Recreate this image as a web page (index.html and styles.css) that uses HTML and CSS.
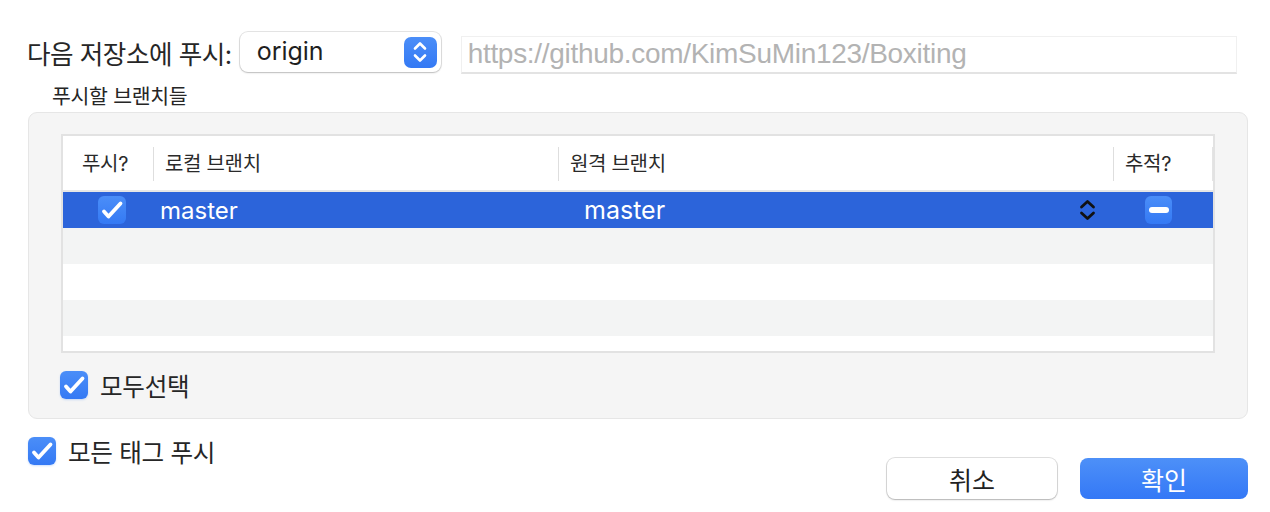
FILE: index.html
```html
<!DOCTYPE html>
<html lang="ko">
<head>
<meta charset="utf-8">
<link rel="stylesheet" href="styles.css">
</head>
<body>
<div class="dialog">
  <div class="top">
    <span class="top-label">다음 저장소에 푸시:</span>
    <div class="select">
      <span class="select-value">origin</span>
      <span class="select-stepper">
        <svg width="14" height="24" viewBox="0 0 14 24"><path d="M2 8.5 L7 3.5 L12 8.5 M2 15.5 L7 20.5 L12 15.5" fill="none" stroke="#fff" stroke-width="2.6" stroke-linecap="round" stroke-linejoin="round"/></svg>
      </span>
    </div>
    <div class="url">https://github.com/KimSuMin123/Boxiting</div>
  </div>
  <div class="section-label">푸시할 브랜치들</div>
  <div class="group">
    <div class="table">
      <div class="thead">
        <div class="th th-push">푸시?</div>
        <div class="th th-local">로컬 브랜치</div>
        <div class="th th-remote">원격 브랜치</div>
        <div class="th th-track">추적?</div>
        <div class="th th-rest"></div>
      </div>
      <div class="row selected">
        <div class="td td-push"><span class="cb"><svg width="28" height="28" viewBox="0 0 28 28"><path d="M6 15.5 L10.5 20.5 L22.5 7.5" fill="none" stroke="#fff" stroke-width="3.8" stroke-linecap="round" stroke-linejoin="round"/></svg></span></div>
        <div class="td td-local">master</div>
        <div class="td td-remote"><span>master</span>
          <svg class="row-stepper" width="17" height="24" viewBox="0 0 17 24"><path d="M2.5 9 L8.5 3.5 L14.5 9 M2.5 15 L8.5 20.5 L14.5 15" fill="none" stroke="#111" stroke-width="2.8" stroke-linecap="round" stroke-linejoin="round"/></svg>
        </div>
        <div class="td td-track"><span class="minus"><span class="minus-bar"></span></span></div>
        <div class="td td-rest"></div>
      </div>
      <div class="row alt"></div>
      <div class="row"></div>
      <div class="row alt"></div>
      <div class="row short"></div>
    </div>
    <label class="check-row select-all">
      <span class="cb"><svg width="28" height="28" viewBox="0 0 28 28"><path d="M6 15.5 L10.5 20.5 L22.5 7.5" fill="none" stroke="#fff" stroke-width="3.8" stroke-linecap="round" stroke-linejoin="round"/></svg></span>
      <span class="check-text">모두선택</span>
    </label>
  </div>
  <div class="bottom">
    <label class="check-row tags">
      <span class="cb"><svg width="28" height="28" viewBox="0 0 28 28"><path d="M6 15.5 L10.5 20.5 L22.5 7.5" fill="none" stroke="#fff" stroke-width="3.8" stroke-linecap="round" stroke-linejoin="round"/></svg></span>
      <span class="check-text">모든 태그 푸시</span>
    </label>
    <div class="buttons">
      <button class="btn btn-cancel">취소</button>
      <button class="btn btn-ok">확인</button>
    </div>
  </div>
</div>
</body>
</html>
```
FILE: styles.css
```css
* { box-sizing: border-box; }
html, body {
  margin: 0;
  padding: 0;
  background: #ffffff;
  width: 1270px;
  height: 512px;
  overflow: hidden;
}
body {
  font-family: Inter, "Noto Sans CJK KR", sans-serif;
  color: #262626;
}
.dialog {
  padding: 32px 22px 0 27px;
}
.top {
  display: flex;
  align-items: center;
  height: 40px;
}
.top-label {
  font-size: 25.6px;
  letter-spacing: -0.5px;
  color: #262626;
}
.select {
  margin-left: 8px;
  width: 201px;
  height: 40px;
  border-radius: 8px;
  background: #fff;
  box-shadow: 0 0 0 1px rgba(0,0,0,0.10), 0 1px 2px rgba(0,0,0,0.18);
  display: flex;
  align-items: center;
  justify-content: space-between;
  padding: 0 4px 0 17px;
  flex: none;
}
.select-value {
  font-size: 25px;
  color: #1f1f1f;
  margin-top: -2px;
}
.select-stepper {
  width: 33px;
  height: 31px;
  border-radius: 7px;
  background: linear-gradient(#4b8ef8, #3479f4);
  display: flex;
  align-items: center;
  justify-content: center;
}
.url {
  margin-left: 20px;
  width: 776px;
  height: 38px;
  margin-top: 6px;
  border: 1px solid #f0f0f0;
  border-bottom: 2px solid #e3e3e3;
  font-family: "Liberation Sans", sans-serif;
  font-size: 28px;
  letter-spacing: -0.3px;
  color: #b3b3b3;
  padding: 0 6px;
  line-height: 34px;
  flex: none;
}
.section-label {
  margin: 12px 0 0 25px;
  font-size: 20.5px;
  line-height: 26px;
  letter-spacing: -0.3px;
  color: #262626;
}
.group {
  margin: 2px 0 0 1px;
  height: 307px;
  background: #f5f5f5;
  border: 1px solid #e6e6e6;
  border-radius: 9px;
  padding: 21px 32px 0 32px;
}
.table {
  width: 1154px;
  height: 219px;
  border: 2px solid #e2e2e2;
  background: #fff;
  overflow: hidden;
}
.thead {
  display: flex;
  height: 56px;
  border-bottom: 2px solid #e6e6e6;
  align-items: center;
}
.th {
  font-size: 20px;
  letter-spacing: -0.3px;
  color: #2a2a2a;
  height: 34px;
  line-height: 34px;
  padding-left: 11px;
  border-left: 1px solid #dedede;
  flex: none;
  margin-top: 2px;
}
.th-push { width: 90px; border-left: none; padding-left: 19px; }
.th-local { width: 405px; }
.th-remote { width: 555px; }
.th-track { width: 99px; }
.th-rest { flex: 1; padding: 0; border-left: 2px solid #e4e4e4; }
.row {
  height: 36px;
  display: flex;
  align-items: center;
}
.row.alt { background: #f3f4f4; }
.row.short { height: 16px; }
.row.selected {
  background: #2c64da;
  color: #fff;
}
.td { height: 36px; display: flex; align-items: center; flex: none; }
.td-push { width: 90px; padding-left: 35px; }
.td-local { width: 405px; padding-left: 7px; font-size: 24px; }
.td-remote { width: 555px; padding-left: 26px; font-size: 25px; justify-content: space-between; padding-right: 17px; }
.td-track { width: 99px; padding-left: 32px; }
.td-rest { flex: 1; }
.cb {
  width: 28px;
  height: 28px;
  border-radius: 6px;
  background: linear-gradient(#4b8ef8, #3479f4);
  display: inline-flex;
  align-items: center;
  justify-content: center;
  flex: none;
}
.cb svg { display: block; }
.row-stepper { display: block; }
.minus {
  width: 27px;
  height: 28px;
  border-radius: 6px;
  background: linear-gradient(#4b8ef8, #3479f4);
  display: flex;
  align-items: center;
  justify-content: center;
}
.minus-bar {
  width: 20px;
  height: 6px;
  border-radius: 3px;
  background: #fff;
}
.check-row {
  display: flex;
  align-items: center;
}
.check-row .cb {
  box-shadow: 0 1px 2px rgba(59,130,246,0.25);
}
.check-text {
  font-size: 24.6px;
  letter-spacing: -0.3px;
  color: #262626;
}
.select-all {
  margin-top: 14px;
  margin-left: -1px;
  gap: 12px;
}
.bottom {
  display: flex;
  justify-content: space-between;
  margin-top: 18px;
  margin-left: 1px;
}
.tags {
  gap: 12px;
  align-self: flex-start;
  height: 28px;
}
.buttons {
  display: flex;
  gap: 23px;
  margin-top: 21px;
}
.btn {
  width: 170px;
  height: 41px;
  border-radius: 8px;
  font-family: Inter, "Noto Sans CJK KR", sans-serif;
  font-size: 25px;
  border: none;
  padding: 0;
}
.btn-cancel {
  background: #fff;
  color: #222;
  box-shadow: 0 0 0 1px rgba(0,0,0,0.12), 0 1px 2px rgba(0,0,0,0.2);
}
.btn-ok {
  width: 168px;
  background: linear-gradient(#4d90f8, #3478f6);
  color: #fff;
}
```
